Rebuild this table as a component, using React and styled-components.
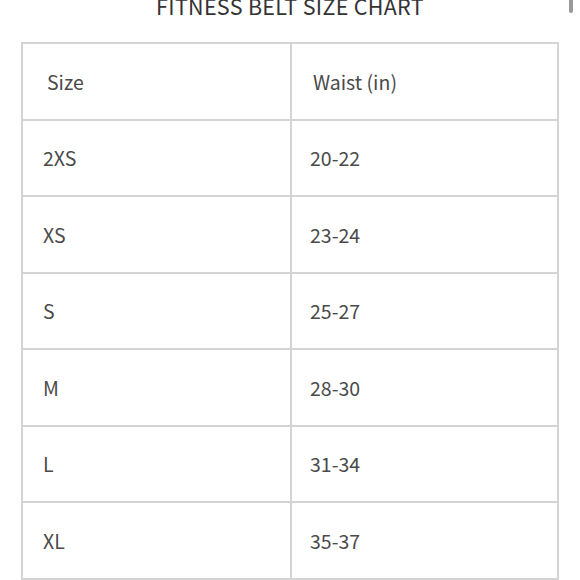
import React from "react";
import styled, { createGlobalStyle } from "styled-components";

const Global = createGlobalStyle`
  html, body { margin: 0; padding: 0; background: #fff; overflow: hidden; }
  body { font-family: "Noto Sans CJK SC", "Noto Sans", sans-serif; }
`;

const Page = styled.div`
  position: relative;
  width: 580px;
  height: 580px;
  overflow: hidden;
  background: #fff;
`;

const Title = styled.h2`
  margin: -5px 0 0;
  font-size: 21.5px;
  line-height: 21px;
  font-weight: 400;
  letter-spacing: 0.3px;
  color: #333;
  text-align: center;
`;

const Table = styled.table`
  margin: 26px 0 0 21px;
  width: 538px;
  border-collapse: collapse;
  table-layout: fixed;
`;

const Cell = styled.td`
  height: 74.5px;
  padding: 0 0 0 ${(p) => (p.$head ? 24 : 20)}px;
  border-top: 2px solid #d4d4d4;
  border-bottom: 2px solid #d4d4d4;
  border-left: 2px solid ${(p) => (p.$mid ? "#bdbdbd" : "#d4d4d4")};
  border-right: 2px solid #d4d4d4;
  font-size: 19.5px;
  font-weight: 400;
  color: #4a4a4a;
  vertical-align: middle;
  text-align: left;
  &:first-child { width: 245px; }
`;

const ValueCell = styled(Cell)`
  padding-left: ${(p) => (p.$head ? 21 : 18)}px;
`;

const Scroll = styled.div`
  position: absolute;
  top: 0;
  right: 7px;
  width: 4px;
  height: 13px;
  border-radius: 0 0 2px 2px;
  background: #9a9a9a;
`;

const rows = [
  ["2XS", "20-22"],
  ["XS", "23-24"],
  ["S", "25-27"],
  ["M", "28-30"],
  ["L", "31-34"],
  ["XL", "35-37"],
];

export default function App() {
  return (
    <Page>
      <Global />
      <Title>FITNESS BELT SIZE CHART</Title>
      <Table>
        <colgroup>
          <col style={{ width: "269px" }} />
          <col />
        </colgroup>
        <tbody>
          <tr>
            <Cell $head>Size</Cell>
            <ValueCell $head $mid>Waist (in)</ValueCell>
          </tr>
          {rows.map(([s, w]) => (
            <tr key={s}>
              <Cell>{s}</Cell>
              <ValueCell $mid>{w}</ValueCell>
            </tr>
          ))}
        </tbody>
      </Table>
      <Scroll />
    </Page>
  );
}
